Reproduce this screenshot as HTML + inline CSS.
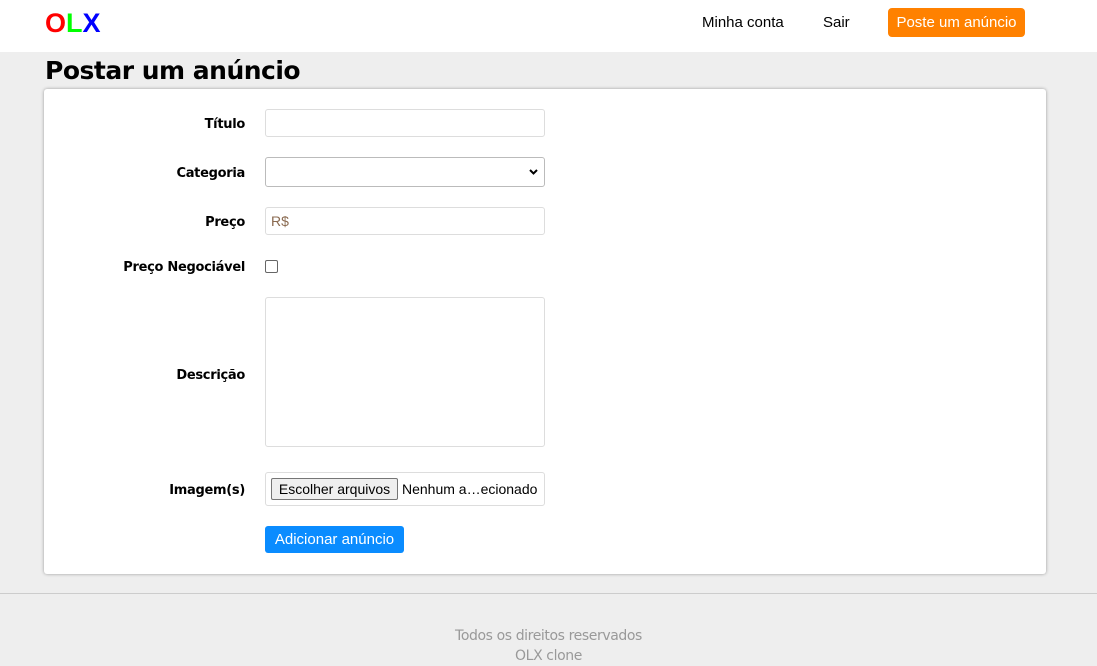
<!DOCTYPE html>
<html><head><meta charset="utf-8"><style>
*{box-sizing:border-box;margin:0;padding:0}
body{width:1097px;height:666px;background:#eeeeee;font-family:"DejaVu Sans","Liberation Sans",sans-serif;position:relative;overflow:hidden}
.hdr{position:absolute;left:0;top:0;width:1097px;height:52px;background:#fff}
.logo{position:absolute;left:45px;top:8px;font:bold 27px "Liberation Sans",sans-serif;letter-spacing:0}
.nav{position:absolute;top:14px;font:15px "Liberation Sans",sans-serif;color:#000}
.post{position:absolute;left:888px;top:8px;width:137px;height:29px;background:#ff8100;color:#fff;border-radius:4px;font:15px "Liberation Sans",sans-serif;text-align:center;line-height:29px}
h1{position:absolute;left:45px;top:56px;font:bold 25px "DejaVu Sans",sans-serif;letter-spacing:-0.5px;color:#000}
.card{position:absolute;left:44px;top:89px;width:1002px;height:485px;background:#fff;border-radius:3px;box-shadow:0 0 3px #999}
.lbl{position:absolute;right:801px;font:bold 13px "DejaVu Sans",sans-serif;color:#000;letter-spacing:-0.3px}
.in{position:absolute;left:221px;width:280px;border:1px solid #ddd;border-radius:3px;background:#fff}
.foot{position:absolute;left:0;top:593px;width:1097px;border-top:1px solid #ccc;text-align:center;color:#999;font:14px "DejaVu Sans",sans-serif;padding-top:32px;line-height:20px;letter-spacing:-0.4px}
</style></head><body>
<div class="hdr">
<div class="logo"><span style="color:#f00">O</span><span style="color:#0f0">L</span><span style="color:#00f">X</span></div>
<div class="nav" style="left:702px">Minha conta</div>
<div class="nav" style="left:823px">Sair</div>
<div class="post">Poste um anúncio</div>
</div>
<h1>Postar um anúncio</h1>
<div class="card">
<div class="lbl" style="top:28px">Título</div>
<div class="in" style="top:20px;height:28px"></div>
<div class="lbl" style="top:77px">Categoria</div>
<div class="in" style="top:68px;height:30px;border-color:#bbb"><svg style="position:absolute;right:6px;top:11px" width="9" height="6" viewBox="0 0 9 6"><path d="M1 1L4.5 4.5L8 1" stroke="#000" stroke-width="2" fill="none"/></svg></div>
<div class="lbl" style="top:126px">Preço</div>
<div class="in" style="top:118px;height:28px;font:14px 'Liberation Sans',sans-serif;color:#8a6a50;padding:5px 5px">R$</div>
<div class="lbl" style="top:171px">Preço Negociável</div>
<div style="position:absolute;left:221px;top:171px;width:13px;height:13px;border:1px solid #666;border-radius:2px"></div>
<div class="lbl" style="top:279px">Descrição</div>
<div class="in" style="top:208px;height:150px"></div>
<div class="lbl" style="top:394px">Imagem(s)</div>
<div class="in" style="top:383px;height:34px;font:14px 'Liberation Sans',sans-serif">
<div style="position:absolute;left:5px;top:5px;width:127px;height:22px;border:1px solid #767676;border-radius:2px;background:#efefef;text-align:center;line-height:20px">Escolher arquivos</div>
<div style="position:absolute;left:136px;top:8px">Nenhum a…ecionado</div>
</div>
<div style="position:absolute;left:221px;top:437px;width:139px;height:27px;background:#0a8cff;color:#fff;border-radius:3px;font:15px 'Liberation Sans',sans-serif;text-align:center;line-height:28px">Adicionar anúncio</div>
</div>
<div class="foot">Todos os direitos reservados<br>OLX clone</div>
</body></html>
